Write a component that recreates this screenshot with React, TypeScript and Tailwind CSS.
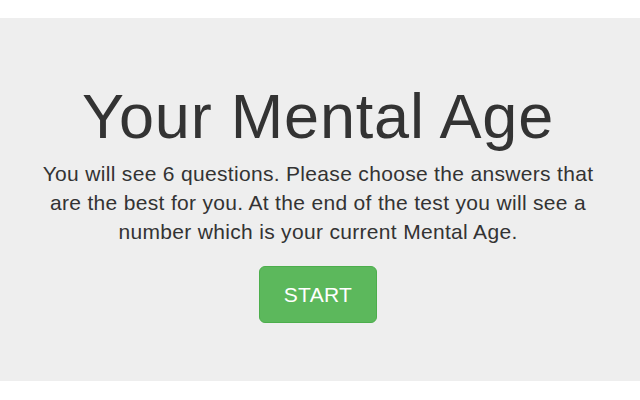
export default function App() {
  return (
    <div className="min-h-[400px] bg-white pt-[18px] font-['Liberation_Sans',Arial,sans-serif] text-[#333]">
      <div className="bg-[#eeeeee] pl-[28px] pr-[32px] pt-[64px] pb-[58px] text-center">
        <h1 className="text-[63px] leading-[69px] tracking-[0.8px]">Your Mental Age</h1>
        <p className="mt-[8px] text-[21px] leading-[29px] tracking-[0.32px]">
          You will see 6 questions. Please choose the answers that are the best for you. At the end of the test you
          will see a number which is your current Mental Age.
        </p>
        <button className="mt-[20px] rounded-[6px] border border-[#4cae4c] bg-[#5cb85c] px-[24px] py-[13px] text-[21px] leading-[29px] tracking-[0.32px] text-white">
          START
        </button>
      </div>
    </div>
  );
}
